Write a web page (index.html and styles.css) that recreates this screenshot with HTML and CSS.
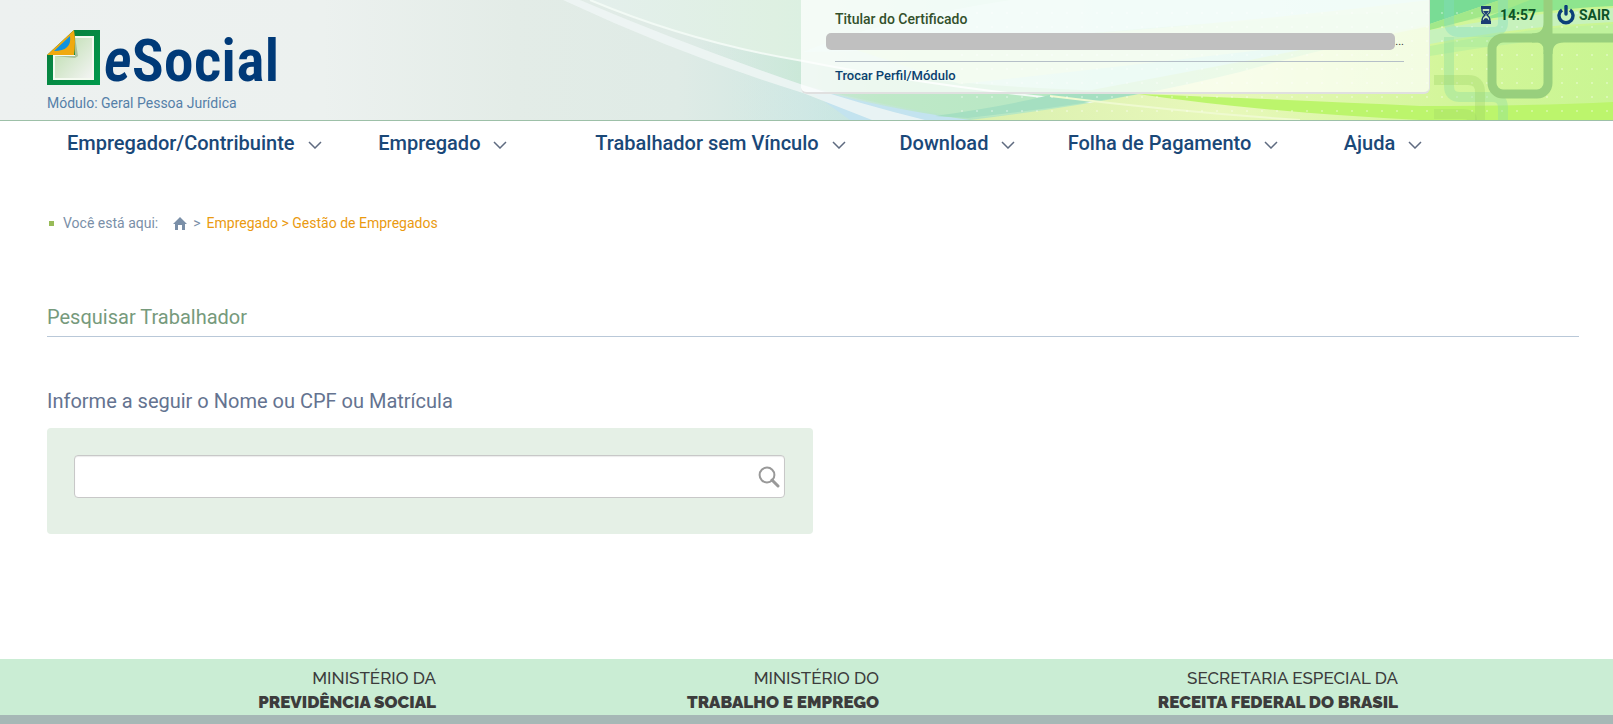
FILE: index.html
```html
<!DOCTYPE html>
<html lang="pt-BR">
<head>
    <meta charset="UTF-8">
    <meta name="viewport" content="width=device-width, initial-scale=1.0">
    <title>eSocial</title>
    <link rel="stylesheet" href="styles.css">
</head>
<body>

    <header class="header">
        <svg class="header-bg" viewBox="0 0 1613 120" preserveAspectRatio="xMaxYMin slice" aria-hidden="true">
            <defs>
                <linearGradient id="base" x1="0" x2="1" y1="0" y2="0">
                    <stop offset="0" stop-color="#edf1f0"/>
                    <stop offset="0.2" stop-color="#ecf1ef"/>
                    <stop offset="0.32" stop-color="#e3ece7"/>
                    <stop offset="0.42" stop-color="#dfebe6"/>
                    <stop offset="0.5" stop-color="#d0e8e2"/>
                    <stop offset="0.6" stop-color="#b4e5c4"/>
                    <stop offset="0.88" stop-color="#c4f3a4"/>
                    <stop offset="1" stop-color="#b9f07c"/>
                </linearGradient>
                <linearGradient id="sky" x1="590" x2="1430" y1="0" y2="0" gradientUnits="userSpaceOnUse">
                    <stop offset="0" stop-color="#e4efec"/>
                    <stop offset="0.22" stop-color="#def0e2"/>
                    <stop offset="0.6" stop-color="#c4f1de"/>
                    <stop offset="1" stop-color="#b4edda"/>
                </linearGradient>
                <linearGradient id="water" x1="730" x2="970" y1="0" y2="0" gradientUnits="userSpaceOnUse">
                    <stop offset="0" stop-color="#d3e8e7" stop-opacity="0"/>
                    <stop offset="1" stop-color="#bfe3ee"/>
                </linearGradient>
                <linearGradient id="grass" x1="700" x2="1150" y1="0" y2="0" gradientUnits="userSpaceOnUse">
                    <stop offset="0" stop-color="#cfe8da" stop-opacity="0"/>
                    <stop offset="0.4" stop-color="#bfe8c8"/>
                    <stop offset="1" stop-color="#b2e8c0"/>
                </linearGradient>
                <linearGradient id="leaf" x1="960" x2="1613" y1="0" y2="0" gradientUnits="userSpaceOnUse">
                    <stop offset="0" stop-color="#d9efae"/>
                    <stop offset="0.4" stop-color="#e8f8bb"/>
                    <stop offset="0.75" stop-color="#d3f69a"/>
                    <stop offset="1" stop-color="#c9f592"/>
                </linearGradient>
                <pattern id="dots" x="961" y="12" width="15" height="14" patternUnits="userSpaceOnUse">
                    <circle cx="1" cy="1" r="1" fill="#fff" fill-opacity="0.4"/>
                </pattern>
            </defs>
            <rect width="1613" height="120" fill="url(#base)"/>
            <path d="M590 0Q690 42 803 61Q920 84 1060 96L1250 60L1430 24V0Z" fill="url(#sky)"/>
            <path d="M590 0Q690 42 803 61Q940 88 1150 92Q1060 112 968 118Q880 106 803 85Q683 44 580 0Z" fill="url(#grass)"/>
            <path d="M730 72L803 90L875 120H730Z" fill="url(#water)"/>
            <path d="M803 86Q880 108 970 120H850Z" fill="#c3e3ef"/>
            <path d="M563 0Q683 56 803 93L872 120H925Q860 104 803 85Q683 44 580 0Z" fill="#eef6f5" fill-opacity="0.85"/>
            <path d="M590 0Q690 42 803 61Q940 88 1110 104" fill="none" stroke="#f2faf5" stroke-width="2"/>
            <path d="M803 52Q880 20 1010 0H1430V10Q1120 26 930 50Z" fill="#dcf6ee" fill-opacity="0.7"/>
            <path d="M850 48Q1150 34 1430 0V30Q1130 66 960 84Z" fill="#daf5cd" fill-opacity="0.8"/>
            <path d="M968 118Q1060 108 1150 92H1060Q1020 104 935 116Z" fill="#a5dfc1"/>
            <path d="M970 120Q1120 102 1240 72Q1340 44 1430 26L1613 0V120Z" fill="url(#leaf)"/>
            <path d="M1430 0H1500L1430 24Z" fill="#79dc95"/>
            <path d="M1430 24L1500 0H1545L1430 30Z" fill="#a2e88a"/>
            <path d="M1430 30Q1520 14 1613 8V22Q1520 26 1430 44Z" fill="#c7f2bc"/>
            <path d="M1530 0H1613V6Q1560 8 1480 20Z" fill="#8ee58e"/>
            <path d="M1430 46Q1520 28 1613 24V34Q1520 40 1430 56Z" fill="#c0f29c"/>
            <path d="M1138 94Q1300 100 1420 106Q1540 106 1613 102V120H1420Q1260 112 1138 94Z" fill="#bcf56c"/>
            <path d="M1050 96Q1180 112 1300 120" fill="none" stroke="#effad0" stroke-width="2"/>
            <rect x="961" width="652" height="120" fill="url(#dots)"/>
            <g fill="none" stroke-width="10">
                <rect x="1449" y="-24" width="54" height="56" rx="9" stroke="#82dbc0" stroke-opacity="0.4"/>
                <path d="M1449 37V86Q1449 97 1460 97H1492Q1503 97 1503 108V120" stroke="#8fdfa0" stroke-opacity="0.4"/>
                <path d="M1454 42H1492" stroke="#9fe4a0" stroke-opacity="0.3"/>
                <path d="M1434 80H1468Q1480 80 1480 92V120" stroke="#9ed468" stroke-opacity="0.35"/>
                <path d="M1434 114H1462Q1472 114 1472 120" stroke="#9ed468" stroke-opacity="0.3"/>
            </g>
            <g fill="none" stroke="#98cf7d" stroke-width="9">
                <rect x="1492" y="38" width="56" height="56" rx="11"/>
                <path d="M1548 50V-5M1532 38Q1548 38 1548 22M1548 54Q1548 38 1564 38H1613M1540 38H1613"/>
            </g>
        </svg>

        <div class="brand">
            <a class="logo" href="#" aria-label="eSocial">
                <svg class="logo-mark" viewBox="0 0 53 56" aria-hidden="true">
                    <defs>
                        <linearGradient id="frame" x1="0" x2="1" y1="0" y2="1">
                            <stop offset="0" stop-color="#0b7a3b"/>
                            <stop offset="1" stop-color="#009a4c"/>
                        </linearGradient>
                        <linearGradient id="paper" x1="0" x2="1" y1="0" y2="1">
                            <stop offset="0" stop-color="#b9dcaa"/>
                            <stop offset="1" stop-color="#f3f4f3"/>
                        </linearGradient>
                    </defs>
                    <path d="M27 0H53V55H0V25Z" fill="url(#frame)"/>
                    <path d="M28 6H47V50H6V25H28Z" fill="#f4faf0"/>
                    <path d="M28 8H45V48H8V26H28Z" fill="url(#paper)"/>
                    <path d="M28 7V26H8L28 28L31 26Z" fill="#7b9c6b" fill-opacity="0.5"/>
                    <path d="M27 0Q29 12 27 25H0Z" fill="#f0a90f"/>
                    <path d="M23 6Q25 21 7 21Z" fill="#1092df"/>
                </svg>
                <span class="logo-text"><em>e</em>Social</span>
            </a>
            <p class="module">Módulo: Geral Pessoa Jurídica</p>
        </div>

        <div class="profile">
            <p class="profile-title">Titular do Certificado</p>
            <div class="profile-name"><span class="profile-mask"></span>...</div>
            <a class="profile-switch" href="#">Trocar Perfil/Módulo</a>
        </div>

        <div class="session">
            <svg class="hourglass" viewBox="0 0 12 18" aria-hidden="true">
                <path d="M1 0H11V3H1ZM1 15H11V18H1Z" fill="#1c3d74"/>
                <path d="M2 3V5Q2 7 5 9Q2 11 2 15H10Q10 11 7 9Q10 7 10 5V3" fill="#c9e8b8" stroke="#1c3d74" stroke-width="1.4"/>
                <path d="M3 5H9L6 9ZM3 15Q4 12 6 12T9 15Z" fill="#1c3d74"/>
            </svg>
            <span class="clock">14:57</span>
            <button class="logout" type="button">
                <svg class="power" viewBox="0 0 18 20" aria-hidden="true">
                    <path d="M5 5A7 7 0 1 0 13 5" fill="none" stroke="#0b3f79" stroke-width="3.4"/>
                    <path d="M9 1.5V9" stroke="#0b3f79" stroke-width="3.4" stroke-linecap="round"/>
                </svg>
                SAIR
            </button>
        </div>
    </header>

    <nav class="menu">
        <a href="#">Empregador/Contribuinte <svg class="chevron" viewBox="0 0 14 8"><path d="M1 1L7 7L13 1"/></svg></a>
        <a href="#">Empregado <svg class="chevron" viewBox="0 0 14 8"><path d="M1 1L7 7L13 1"/></svg></a>
        <a href="#">Trabalhador sem Vínculo <svg class="chevron" viewBox="0 0 14 8"><path d="M1 1L7 7L13 1"/></svg></a>
        <a href="#">Download <svg class="chevron" viewBox="0 0 14 8"><path d="M1 1L7 7L13 1"/></svg></a>
        <a href="#">Folha de Pagamento <svg class="chevron" viewBox="0 0 14 8"><path d="M1 1L7 7L13 1"/></svg></a>
        <a href="#">Ajuda <svg class="chevron" viewBox="0 0 14 8"><path d="M1 1L7 7L13 1"/></svg></a>
    </nav>

    <main class="content">
        <div class="breadcrumb">
            <span class="bullet"></span>
            <span class="breadcrumb-label">Você está aqui:</span>
            <a class="home" href="#" aria-label="Início">
                <svg viewBox="0 0 14 13" aria-hidden="true"><path d="M7 0L14 7H12V13H9V8H5V13H2V7H0Z" fill="#7a8fa8"/></svg>
            </a>
            <span class="separator">&gt;</span>
            <a class="breadcrumb-link" href="#">Empregado &gt; Gestão de Empregados</a>
        </div>

        <h1 class="page-title">Pesquisar Trabalhador</h1>

        <form class="search">
            <label class="search-label" for="trabalhador">Informe a seguir o Nome ou CPF ou Matrícula</label>
            <div class="search-panel">
                <div class="search-box">
                    <input id="trabalhador" type="text">
                    <button type="button" aria-label="Pesquisar">
                        <svg viewBox="0 0 22 22" aria-hidden="true">
                            <circle cx="9" cy="9" r="7.4" fill="none" stroke="#999" stroke-width="2"/>
                            <path d="M14 14L20 20" stroke="#999" stroke-width="3" stroke-linecap="round"/>
                        </svg>
                    </button>
                </div>
            </div>
        </form>
    </main>

    <footer class="footer">
        <p>MINISTÉRIO DA<br><strong>PREVIDÊNCIA SOCIAL</strong></p>
        <p>MINISTÉRIO DO<br><strong>TRABALHO E EMPREGO</strong></p>
        <p>SECRETARIA ESPECIAL DA<br><strong>RECEITA FEDERAL DO BRASIL</strong></p>
    </footer>

</body>
</html>
```
FILE: styles.css
```css
* {
    box-sizing: border-box;
}

body {
    margin: 0;
    min-height: 100vh;
    display: flex;
    flex-direction: column;
    font-family: Roboto, sans-serif;
    font-size: 14px;
    background-color: #fff;
}

p {
    margin: 0;
}

a {
    text-decoration: none;
}

button {
    padding: 0;
    border: none;
    background: none;
    font: inherit;
    cursor: pointer;
}

svg {
    display: block;
}

/* header */

.header {
    position: relative;
    display: flex;
    align-items: flex-start;
    height: 121px;
    border-bottom: 1px solid #9dc0a8;
    overflow: hidden;
}

.header-bg {
    position: absolute;
    top: 0;
    right: 0;
    width: 100%;
    height: 120px;
    z-index: -1;
}

.brand {
    flex: 1;
    padding: 30px 0 0 47px;
}

.logo {
    display: flex;
    align-items: flex-start;
    gap: 4px;
    height: 56px;
    color: #003a78;
}

.logo-mark {
    width: 53px;
    height: 56px;
}

.logo-text {
    font-family: "Roboto Condensed", "Liberation Sans Narrow", Roboto, sans-serif;
    font-size: 60px;
    font-weight: 600;
    line-height: 62px;
}

.module {
    padding-top: 8px;
    line-height: 18px;
    color: #5580a8;
}

.profile {
    width: 39%;
    height: 94px;
    padding: 9px 25px 0 34px;
    background-color: rgba(255, 255, 255, 0.7);
    border-right: 1px solid #e0e4e0;
    border-bottom: 2px solid #e0e0e0;
    border-radius: 0 0 6px 6px;
}

.profile-title {
    line-height: 20px;
    font-weight: 500;
    color: #32502b;
}

.profile-name {
    display: flex;
    align-items: center;
    height: 32px;
    margin-left: -9px;
    padding-bottom: 7px;
    font-size: 11px;
    color: #333;
}

.profile-mask {
    flex: 1;
    height: 17px;
    border-radius: 5px;
    background-color: #c0c0c0;
}

.profile-switch {
    display: block;
    border-top: 1px solid #b5bfc8;
    font-size: 13px;
    font-weight: 500;
    line-height: 27px;
    color: #0b416f;
}

.session {
    display: flex;
    align-items: center;
    width: 183px;
    padding: 5px 3px 0 50px;
    font-weight: bold;
    line-height: 20px;
    color: #0d5427;
}

.hourglass {
    width: 12px;
    height: 18px;
}

.clock {
    flex: 1;
    padding-left: 8px;
}

.logout {
    display: flex;
    align-items: center;
    gap: 4px;
    color: #0d5427;
}

.power {
    width: 18px;
    height: 20px;
}

/* menu */

.menu {
    display: grid;
    grid-template-columns: 311fr 217fr 304fr 168fr 276fr 269fr;
    padding-left: 67px;
}

.menu a {
    display: flex;
    align-items: center;
    gap: 13px;
    font-size: 20px;
    font-weight: 500;
    line-height: 44px;
    white-space: nowrap;
    color: #1a4878;
}

.chevron {
    width: 14px;
    height: 8px;
    margin-top: 4px;
    fill: none;
    stroke: #5f6b80;
    stroke-width: 1.5;
}

/* content */

.content {
    flex: 1;
    padding: 48px 34px 0 47px;
}

.breadcrumb {
    display: flex;
    align-items: center;
    line-height: 20px;
    color: #7a8fa8;
}

.bullet {
    width: 5px;
    height: 5px;
    margin: 0 9px 0 2px;
    background-color: #98bb58;
}

.home {
    width: 14px;
    margin: 0 6px 0 15px;
}

.breadcrumb-link {
    margin-left: 6px;
    color: #ea9a10;
}

.page-title {
    margin: 69px 0 0;
    padding-bottom: 4px;
    border-bottom: 1px solid #b9c8d8;
    font-size: 20px;
    font-weight: normal;
    line-height: 30px;
    color: #769a7c;
}

.search {
    padding-top: 49px;
}

.search-label {
    display: block;
    font-size: 20px;
    line-height: 30px;
    color: #647390;
}

.search-panel {
    width: 50%;
    height: 106px;
    margin-top: 12px;
    padding: 27px 28px 0 27px;
    border-radius: 4px;
    background-color: #e5f0e6;
}

.search-box {
    display: flex;
    align-items: center;
    height: 43px;
    padding-right: 4px;
    border: 1px solid #c8c8c8;
    border-radius: 4px;
    background-color: #fff;
    box-shadow: inset 0 1px 1px rgba(0, 0, 0, 0.08);
}

.search-box input {
    flex: 1;
    height: 39px;
    padding: 0 10px;
    border: none;
    outline: none;
    background: none;
    font: inherit;
    font-size: 16px;
}

.search-box svg {
    width: 22px;
    height: 22px;
}

/* footer */

.footer {
    display: grid;
    grid-template-columns: 436fr 443fr 519fr 215fr;
    padding: 7px 0 1px;
    border-bottom: 9px solid #a6b8b6;
    background-color: #caedd4;
    font-family: Raleway, Lato, sans-serif;
    font-size: 17px;
    font-weight: 500;
    line-height: 24px;
    text-align: right;
    color: #3c3c3c;
}

.footer strong {
    font-weight: 900;
}
```
